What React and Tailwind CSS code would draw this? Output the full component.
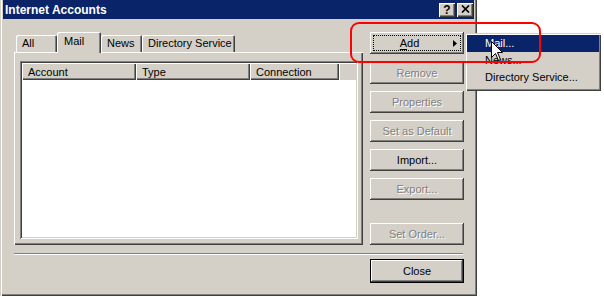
import React from "react";

const RAISED =
  "shadow-[inset_-1px_-1px_0_#404040,inset_1px_1px_0_#ffffff,inset_-2px_-2px_0_#808080,inset_2px_2px_0_#d4d0c8]";

function Btn({ children, disabled, className = "" }) {
  return (
    <div
      className={
        "w-[94px] h-[22px] bg-[#d4d0c8] flex items-center justify-center leading-[22px] shadow-[inset_-1px_-1px_0_#404040,inset_1px_1px_0_#ffffff,inset_-2px_-2px_0_#808080,inset_2px_2px_0_#d4d0c8] " +
        (disabled ? "text-[#808080] [text-shadow:1px_1px_0_#ffffff] " : "text-black ") +
        className
      }
    >
      {children}
    </div>
  );
}

function Tab({ children, className = "" }) {
  return (
    <div
      className={
        "h-[17px] leading-[17px] pl-[6px] bg-[#d4d0c8] rounded-t-[2px] shadow-[inset_1px_1px_0_#ffffff,inset_-1px_0_0_#404040,inset_-2px_0_0_#808080] " +
        className
      }
    >
      {children}
    </div>
  );
}

function HeadCell({ children, className = "" }) {
  return (
    <div
      className={
        "h-[17px] leading-[17px] pl-[6px] pt-[1px] shadow-[inset_1px_1px_0_#ffffff,inset_-1px_-1px_0_#404040,inset_-2px_-2px_0_#808080] " +
        className
      }
    >
      {children}
    </div>
  );
}

export default function App() {
  return (
    <div className="relative w-[604px] h-[297px] bg-white overflow-hidden font-['Liberation_Sans',Arial,sans-serif] text-[11px] text-black">
      {/* Dialog */}
      <div className="w-[477px] h-[296px] bg-[#d4d0c8] flex flex-col px-[3px] pb-[3px] shadow-[inset_1px_0_0_#d4d0c8,inset_2px_0_0_#ffffff,inset_-1px_-1px_0_#404040,inset_-2px_-2px_0_#808080]">
        {/* Title bar */}
        <div className="h-[19px] bg-[#0a246a] flex items-center pl-[2px] pr-[1px]">
          <span className="flex-1 text-white font-bold text-[12px] leading-[19px] pt-[2px]">
            Internet Accounts
          </span>
          <div className="flex gap-[2px]">
            <div className="w-[16px] h-[14px] bg-[#d4d0c8] flex items-center justify-center shadow-[inset_1px_1px_0_#ffffff,inset_-1px_-1px_0_#404040,inset_-2px_-2px_0_#808080] font-bold text-[12px] leading-[14px] pt-[1px]">
              ?
            </div>
            <div className="w-[16px] h-[14px] bg-[#d4d0c8] flex items-center justify-center shadow-[inset_1px_1px_0_#ffffff,inset_-1px_-1px_0_#404040,inset_-2px_-2px_0_#808080]">
              <svg width="9" height="8" viewBox="0 0 9 8" className="mb-[1px]">
                <path d="M1 0.5L8 7.5M8 0.5L1 7.5" stroke="#000" strokeWidth="1.7" />
              </svg>
            </div>
          </div>
        </div>

        {/* Content */}
        <div className="flex-1 flex flex-col pl-[11px] pt-[13px]">
          <div className="flex gap-[7px]">
            {/* Left: tabs + panel */}
            <div className="w-[349px] flex flex-col">
              <div className="h-[20px] flex items-end pl-[2px]">
                <Tab className="w-[41px]">All</Tab>
                <div className="relative z-10 w-[44px] h-[21px] mb-[-1px] pl-[7px] pt-[2px] leading-[15px] bg-[#d4d0c8] rounded-t-[2px] shadow-[inset_1px_1px_0_#ffffff,inset_-1px_0_0_#404040,inset_-2px_0_0_#808080]">
                  Mail
                </div>
                <Tab className="w-[41px]">News</Tab>
                <Tab className="w-[93px]">Directory Service</Tab>
              </div>
              <div className="h-[193px] pl-[6px] pt-[9px] shadow-[inset_1px_1px_0_#ffffff,inset_-1px_-1px_0_#404040,inset_-2px_-2px_0_#808080]">
                <div className="w-[338px] h-[178px] bg-white p-[2px] shadow-[inset_1px_1px_0_#808080,inset_-1px_-1px_0_#ffffff,inset_2px_2px_0_#404040,inset_-2px_-2px_0_#d4d0c8]">
                  <div className="flex bg-[#d4d0c8]">
                    <HeadCell className="w-[114px]">Account</HeadCell>
                    <HeadCell className="w-[114px]">Type</HeadCell>
                    <HeadCell className="w-[89px]">Connection</HeadCell>
                    <div className="w-[17px] h-[17px] shadow-[inset_1px_1px_0_#ffffff]" />
                  </div>
                </div>
              </div>
            </div>

            {/* Right: buttons */}
            <div className="w-[94px] flex flex-col">
              <div className="relative w-[94px] h-[22px] bg-[#d4d0c8] flex items-center shadow-[inset_-1px_-1px_0_#404040,inset_1px_1px_0_#ffffff,inset_-2px_-2px_0_#808080,inset_2px_2px_0_#d4d0c8]">
                <span className="flex-1 text-center pr-[4px] leading-[22px]">
                  <span className="underline underline-offset-[2px]">A</span>dd
                </span>
                <svg width="4" height="7" viewBox="0 0 4 7" className="mr-[7px]">
                  <path d="M0 0L4 3.5L0 7Z" fill="#000" />
                </svg>
                <div className="absolute inset-[3px] border border-dotted border-black" />
              </div>
              <Btn disabled className="mt-[8px]">Remove</Btn>
              <Btn disabled className="mt-[7px]">Properties</Btn>
              <Btn disabled className="mt-[7px]">Set as Default</Btn>
              <Btn className="mt-[7px]">Import...</Btn>
              <Btn disabled className="mt-[7px]">Export...</Btn>
              <Btn disabled className="mt-[23px]">Set Order...</Btn>
            </div>
          </div>

          {/* Separator */}
          <div className="mt-[8px] w-[449px] h-[2px] border-t border-[#808080] border-b border-b-white" />

          {/* Close */}
          <div className="mt-[4px] w-[450px] flex justify-end">
            <div className="w-[94px] h-[24px] border border-black">
              <div className="w-full h-full bg-[#d4d0c8] flex items-center justify-center leading-[22px] shadow-[inset_-1px_-1px_0_#404040,inset_1px_1px_0_#ffffff,inset_-2px_-2px_0_#808080,inset_2px_2px_0_#d4d0c8]">
                Close
              </div>
            </div>
          </div>
        </div>
      </div>

      {/* Popup menu */}
      <div className="absolute left-[465px] top-[33px] w-[136px] bg-[#d4d0c8] px-[2px] pt-[2px] pb-[5px] shadow-[inset_1px_1px_0_#d4d0c8,inset_2px_2px_0_#ffffff,inset_-1px_-1px_0_#404040,inset_-2px_-2px_0_#808080]">
        <div className="h-[17px] leading-[17px] pl-[18px] bg-[#0a246a] text-white">Mail...</div>
        <div className="h-[17px] leading-[17px] pl-[18px]">News...</div>
        <div className="h-[17px] leading-[17px] pl-[18px]">Directory Service...</div>
      </div>

      {/* Red highlight */}
      <div className="absolute left-[350px] top-[22px] w-[191px] h-[41px] border-2 border-[#ff0000] rounded-[9px]" />

      {/* Mouse cursor */}
      <svg
        width="13"
        height="21"
        viewBox="0 0 13 21"
        className="absolute left-[491px] top-[41px]"
      >
        <path
          d="M0.5 0.5L0.5 16.5L4.5 12.5L7.5 19.5L9.5 18.5L6.5 11.5L11.5 11.5Z"
          fill="#ffffff"
          stroke="#000000"
          strokeWidth="1"
          strokeLinejoin="miter"
        />
      </svg>
    </div>
  );
}
